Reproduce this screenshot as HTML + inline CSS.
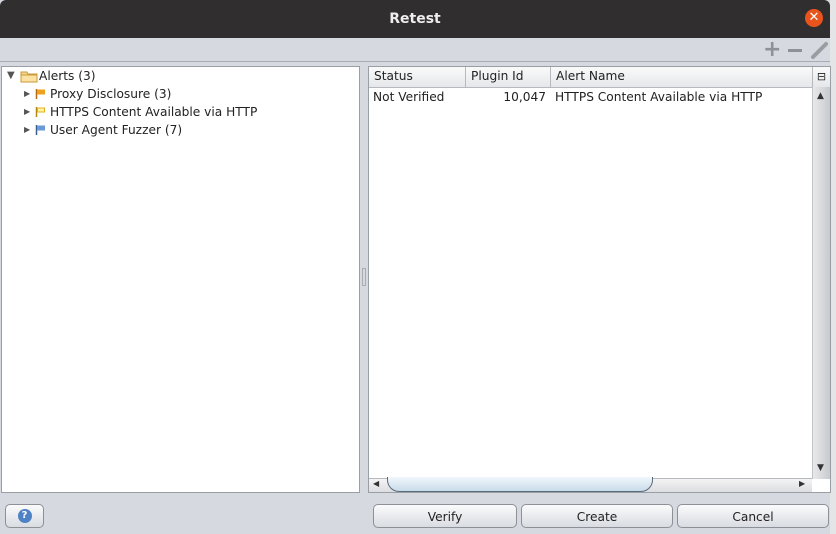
<!DOCTYPE html>
<html><head><style>
*{margin:0;padding:0;box-sizing:border-box}
body{width:836px;height:534px;background:#d6d9df;font-family:"DejaVu Sans","Liberation Sans",sans-serif;font-size:12.2px;color:#222;position:relative;overflow:hidden}
.a{position:absolute}
.title{left:0;top:0;width:830px;height:38px;background:#302e2e;border-radius:6px 6px 0 0;color:#eee;font-weight:bold;font-size:14px;text-align:center;line-height:38px}
.close{left:805px;top:9px;width:18px;height:18px;border-radius:50%;background:#e9541d;color:#fff;font-size:13px;line-height:18px;text-align:center;font-weight:bold}
.panel{background:#fff;border:1px solid #9a9ea5}
.btn{border:1px solid #8d9096;border-radius:5px;background:linear-gradient(#fbfbfc,#e6e8ec 60%,#d9dce1);text-align:center;line-height:24px;font-size:12.2px}
.hd{top:0;height:20px;line-height:19px;padding-left:5px;border-right:1px solid #b6b9be;background:linear-gradient(#fafafa,#e6e7ea)}
</style></head><body>
<div class="a" style="left:830px;top:0;width:6px;height:534px;background:#e4e5e7"></div>
<div class="a title">Retest</div>
<div class="a close">✕</div>
<div class="a" style="left:0;top:61px;width:830px;height:1px;background:#a9acb2"></div>
<div class="a" style="left:763px;top:40px;font-size:22px;color:#8e9196;font-weight:bold;line-height:20px">+</div>
<div class="a" style="left:788px;top:49px;width:14px;height:3px;background:#8e9196"></div>
<svg class="a" style="left:810px;top:41px" width="18" height="18"><path d="M3 16 L16 3" stroke="#9a9da2" stroke-width="4" stroke-linecap="round"/></svg>

<div class="a panel" style="left:1px;top:66px;width:359px;height:427px">
 <div class="a" style="left:5px;top:3px;font-size:10px;color:#555">▼</div>
 <svg class="a" style="left:18px;top:2px" width="18" height="14"><path d="M1 3h6l1 2h9v8H1z" fill="#f6d58a" stroke="#c89a3a"/><path d="M1 6h16v7H1z" fill="#fbe2a3" stroke="#c89a3a"/></svg>
 <div class="a" style="left:37px;top:2px">Alerts (3)</div>
 <div class="a" style="left:22px;top:22px;font-size:8px;color:#555">▶</div>
 <svg class="a" style="left:33px;top:21px" width="11" height="12"><path d="M1.5 1v10" stroke="#b06a10" stroke-width="1.5"/><path d="M2 1.5h8v5H2z" fill="#f0a020"/></svg>
 <div class="a" style="left:48px;top:20px">Proxy Disclosure (3)</div>
 <div class="a" style="left:22px;top:40px;font-size:8px;color:#555">▶</div>
 <svg class="a" style="left:33px;top:39px" width="11" height="12"><path d="M1.5 1v10" stroke="#b08a10" stroke-width="1.5"/><path d="M2.5 2h7v4h-7z" fill="#fff3a0" stroke="#e0b020"/></svg>
 <div class="a" style="left:48px;top:38px">HTTPS Content Available via HTTP</div>
 <div class="a" style="left:22px;top:58px;font-size:8px;color:#555">▶</div>
 <svg class="a" style="left:33px;top:57px" width="11" height="12"><path d="M1.5 1v10" stroke="#3a5f90" stroke-width="1.5"/><path d="M2 1.5h8v5H2z" fill="#6a9ad8"/></svg>
 <div class="a" style="left:48px;top:56px">User Agent Fuzzer (7)</div>
</div>
<div class="a" style="left:362px;top:268px;width:4px;height:18px;border:1px solid #a9acb2"></div>

<div class="a panel" style="left:368px;top:66px;width:463px;height:427px">
 <div class="a hd" style="left:0;width:97px">Status</div>
 <div class="a hd" style="left:97px;width:85px">Plugin Id</div>
 <div class="a hd" style="left:182px;width:262px">Alert Name</div>
 <div class="a" style="left:444px;top:0;width:17px;height:20px;background:linear-gradient(#fafafa,#e6e7ea);font-size:11px;text-align:center;line-height:19px">⊟</div>
 <div class="a" style="left:0;top:20px;width:461px;height:1px;background:#b6b9be"></div>
 <div class="a" style="left:4px;top:23px">Not Verified</div>
 <div class="a" style="left:97px;top:23px;width:80px;text-align:right">10,047</div>
 <div class="a" style="left:186px;top:23px">HTTPS Content Available via HTTP</div>
 <div class="a" style="left:443px;top:20px;width:18px;height:392px;background:linear-gradient(90deg,#e8e9eb,#c8cacd);border-left:1px solid #c0c2c6"></div>
 <div class="a" style="left:448px;top:24px;font-size:9px;color:#333">▲</div>
 <div class="a" style="left:448px;top:396px;font-size:9px;color:#333">▼</div>
 <div class="a" style="left:0;top:411px;width:443px;height:14px;background:linear-gradient(#f4f4f5,#dcdde0);border-top:1px solid #b6b9be"></div>
 <div class="a" style="left:4px;top:412px;font-size:8px;color:#333">◀</div>
 <div class="a" style="left:18px;top:410px;width:266px;height:15px;border:1px solid #5a6a7a;border-top:none;border-radius:0 0 12px 12px;background:linear-gradient(#f0f6fb,#c9dcea)"></div>
 <div class="a" style="left:430px;top:412px;font-size:8px;color:#333">▶</div>
</div>

<div class="a btn" style="left:5px;top:504px;width:39px;height:24px"><span style="display:inline-block;width:14px;height:14px;border-radius:50%;background:#4f82c4;color:#fff;font-size:10px;line-height:14px;font-weight:bold;margin-top:4px;vertical-align:top">?</span></div>
<div class="a btn" style="left:373px;top:504px;width:144px;height:24px">Verify</div>
<div class="a btn" style="left:521px;top:504px;width:152px;height:24px">Create</div>
<div class="a btn" style="left:677px;top:504px;width:152px;height:24px">Cancel</div>
</body></html>
